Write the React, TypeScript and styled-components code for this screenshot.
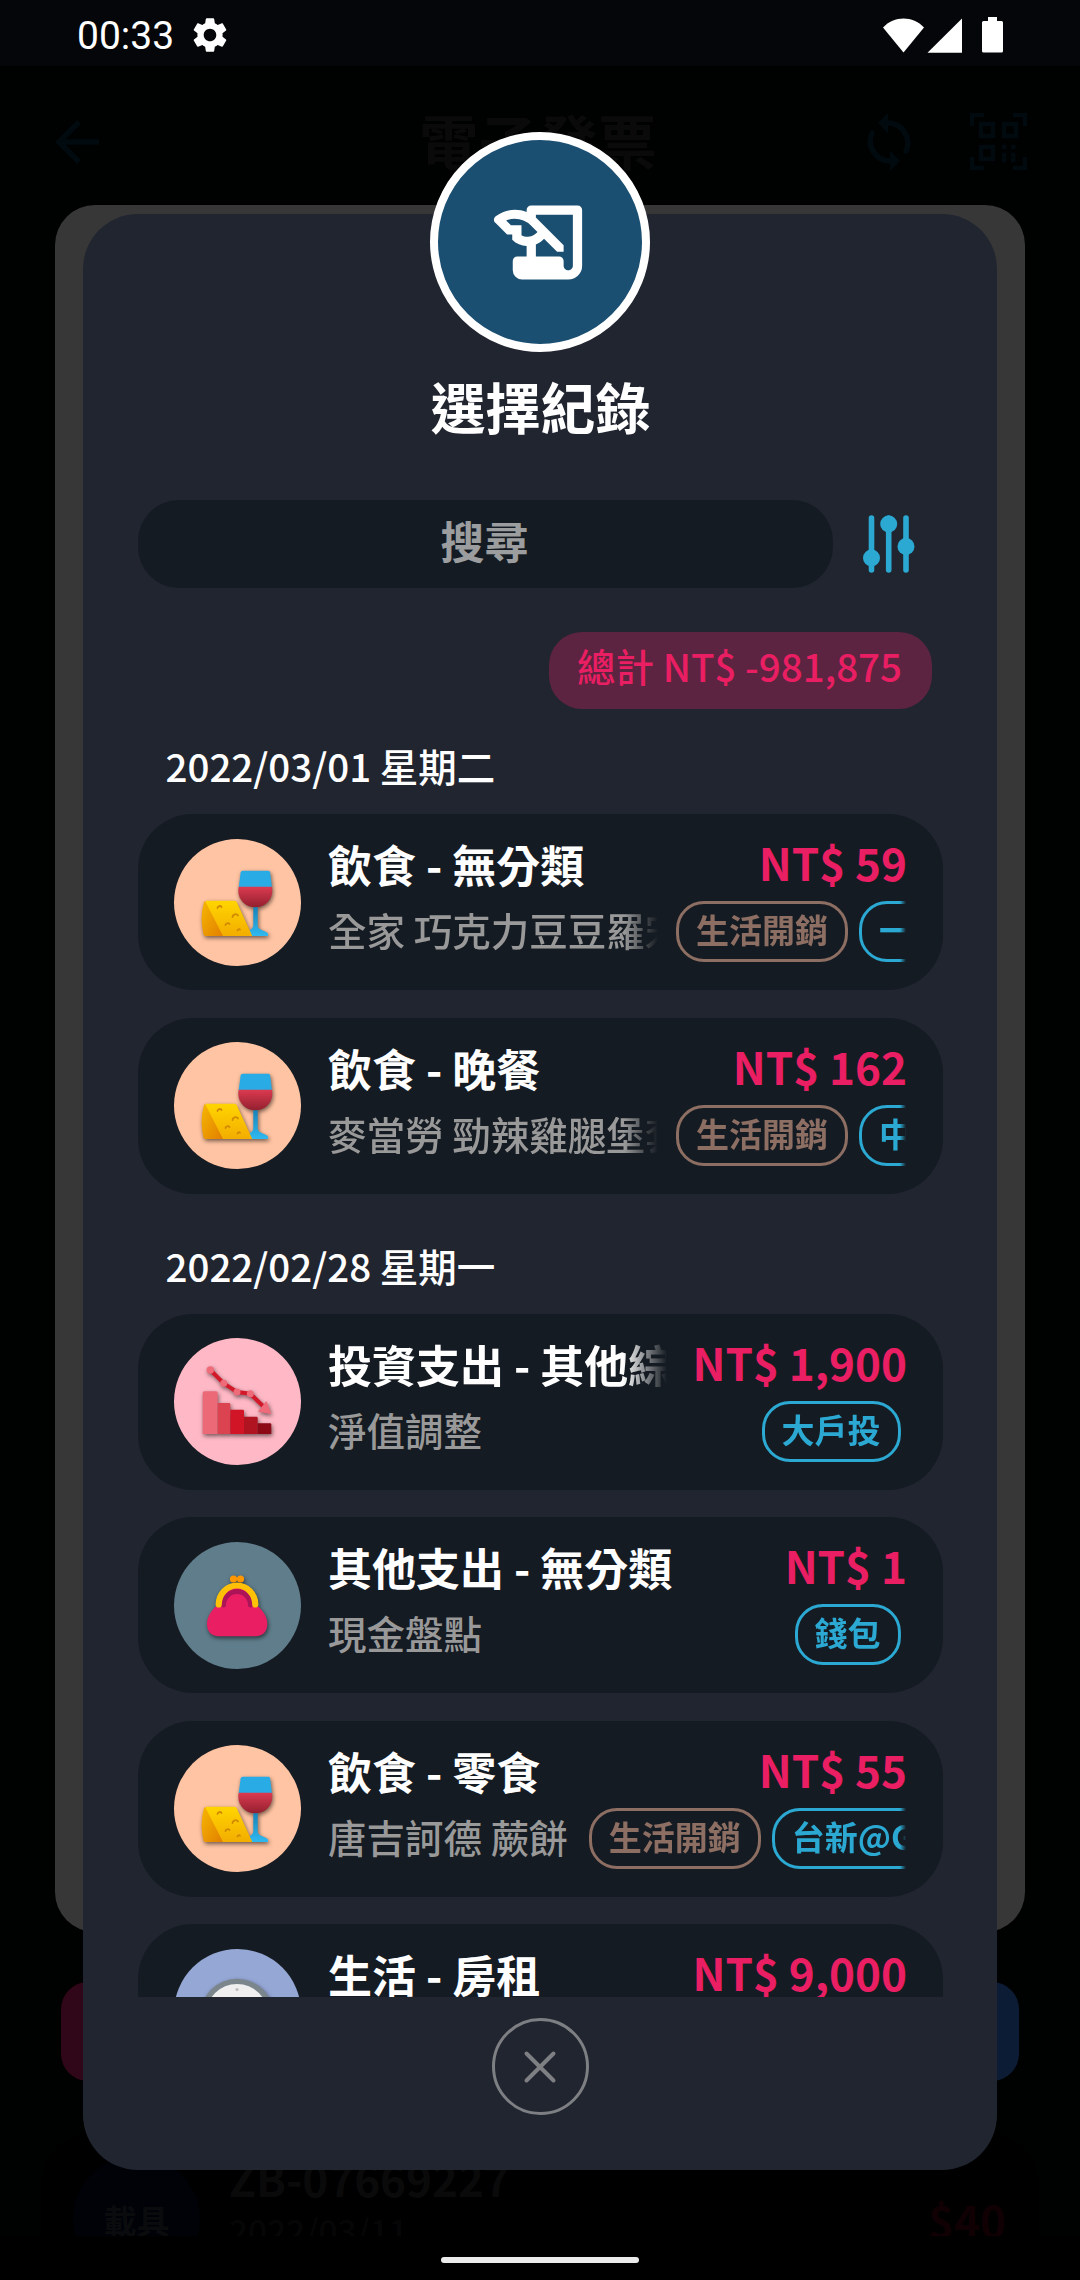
import React from "react";
import styled, { createGlobalStyle, css } from "styled-components";

const Global = createGlobalStyle`
  * { box-sizing: border-box; }
  body { margin: 0; background: #000101; }
`;

const PINK = "#e91e63";
const CYAN = "#2ba9d3";
const BROWN = "#8d6e63";

const Screen = styled.div`
  position: relative;
  width: 1080px;
  height: 2280px;
  overflow: hidden;
  display: flex;
  flex-direction: column;
  background: #000101;
  color: #fff;
  font-family: "Noto Sans CJK TC", sans-serif;
  font-weight: 500;
  white-space: nowrap;
`;

const StatusBar = styled.header`
  height: 66px;
  flex: none;
  display: flex;
  align-items: center;
  padding: 3px 76px 0 77px;
  background: #050609;
`;
const Clock = styled.span`
  font: 400 39px/48px Roboto, sans-serif;
  padding-top: 2px;
  margin-right: 15px;
`;
const StatusIcons = styled.svg`
  margin-left: auto;
  margin-right: 1px;
`;

const AppBar = styled.div`
  height: 139px;
  flex: none;
  display: flex;
  align-items: center;
  justify-content: space-between;
  padding: 12px 53px 0 55px;
  color: #000a0f;
`;
const AppTitle = styled.h1`
  margin: 0 0 6px 111px;
  font-size: 59.5px;
  line-height: 84px;
  color: #0a0a0a;
`;
const AppActions = styled.div`
  display: flex;
  align-items: center;
  gap: 58px;
`;
const Panel = styled.div`
  height: 1727px;
  flex: none;
  margin: 0 55px;
  border-radius: 40px;
  background: #373737;
`;
const ActionRow = styled.div`
  display: flex;
  justify-content: space-between;
  margin: 50px 61px 0;
`;
const ActionButton = styled.div<{ $color: string }>`
  width: 440px;
  height: 99px;
  border-radius: 27px;
  background: ${(p) => p.$color};
`;
const Invoice = styled.div`
  flex: 1;
  min-height: 0;
  overflow: hidden;
  display: flex;
  margin: 51px 41px 0;
  padding: 24px 33px 0 32px;
  border-radius: 55px 55px 0 0;
  background: #000;
`;
const Carrier = styled.div`
  width: 127px;
  height: 127px;
  flex: none;
  display: grid;
  place-items: center;
  border-radius: 50%;
  background: #000208;
  color: #0a0b0d;
  font-size: 33px;
  font-weight: 700;
`;
const InvoiceText = styled.div`
  padding: 0 0 0 29px;
  flex: 1;
`;
const InvoiceNo = styled.div`
  font: 700 44px/44px "Noto Sans CJK TC", sans-serif;
  color: #0a0a0a;
`;
const InvoiceDate = styled.div`
  font-size: 33.5px;
  line-height: 60px;
  color: #060606;
`;
const InvoiceAmount = styled.div`
  font-size: 44px;
  line-height: 50px;
  font-weight: 700;
  padding-top: 38px;
  color: #100004;
`;
const NavBar = styled.footer`
  height: 44px;
  flex: none;
  display: flex;
  justify-content: center;
  align-items: flex-start;
  padding-top: 21px;
  background: #000;
`;
const HomePill = styled.div`
  width: 198px;
  height: 6px;
  border-radius: 3px;
  background: #ebebeb;
`;

const Modal = styled.section`
  position: absolute;
  left: 83px;
  top: 214px;
  width: 914px;
  height: 1956px;
  display: flex;
  flex-direction: column;
  padding: 0 54px 0 55px;
  border-radius: 55px;
  background: #202530;
`;
const Badge = styled.div`
  position: absolute;
  left: 347px;
  top: -82px;
  width: 220px;
  height: 220px;
  display: grid;
  place-items: center;
  border: 8px solid #fff;
  border-radius: 50%;
  background: #1b4f72;
`;
const ModalTitle = styled.h2`
  margin: 151px 0 0;
  font-size: 55px;
  line-height: 80px;
  font-weight: 700;
  text-align: center;
`;
const SearchRow = styled.div`
  display: flex;
  align-items: center;
  gap: 30px;
  margin-top: 55px;
`;
const SearchBox = styled.div`
  width: 695px;
  height: 88px;
  border-radius: 41px;
  background: #151b22;
  color: #9b9d9f;
  font-size: 44px;
  font-weight: 700;
  line-height: 81px;
  padding-right: 2px;
  text-align: center;
`;
const Total = styled.div`
  align-self: flex-end;
  height: 77px;
  margin: 44px 11px 0 0;
  padding: 0 30px 0 28px;
  border-radius: 33px;
  background: #5c2440;
  color: ${PINK};
  font-size: 38.5px;
  line-height: 67px;
`;
const List = styled.div`
  flex: none;
  height: 1288px;
  overflow: hidden;
`;
const DayGroup = styled.section`
  display: flex;
  flex-direction: column;
  gap: 27.5px;
  margin-bottom: 15px;
`;
const DayLabel = styled.h3`
  margin: 0 0 -7.5px 27.5px;
  padding-top: 27px;
  font-size: 38.5px;
  line-height: 58px;
  font-weight: 500;
`;
const Card = styled.article`
  display: flex;
  align-items: center;
  height: 176px;
  padding: 0 37px 0 36px;
  border-radius: 55px;
  background: #151b22;
`;
const Disc = styled.div<{ $color: string }>`
  flex: none;
  width: 127px;
  height: 127px;
  border-radius: 50%;
  background: ${(p) => p.$color};
  svg { display: block; filter: drop-shadow(1px 2px 2px rgba(0, 0, 0, 0.55)); }
`;
const Body = styled.div`
  flex: 1;
  min-width: 0;
  height: 100%;
  padding: 19px 0 0 27px;
`;
const Line = styled.div`
  display: flex;
  justify-content: space-between;
`;
const fade = (px: number) => css`
  mask-image: linear-gradient(to left, transparent, #000 ${px}px);
`;
const Name = styled.div<{ $fade?: boolean }>`
  flex: 0 1 auto;
  min-width: 0;
  overflow: hidden;
  font-size: 44px;
  line-height: 62px;
  height: 68px;
  font-weight: 700;
  ${(p) => p.$fade && fade(44)}
`;
const Amount = styled.div`
  flex: none;
  margin-right: -1px;
  padding-left: 25px;
  color: ${PINK};
  font-size: 44px;
  line-height: 59px;
  font-weight: 700;
`;
const Note = styled.div<{ $fade?: boolean }>`
  flex: none;
  max-width: 330px;
  padding-right: 3px;
  overflow: hidden;
  color: #999;
  font-size: 38.5px;
  line-height: 57px;
  ${(p) => p.$fade && fade(34)}
`;
const Tags = styled.div`
  flex: 1;
  min-width: 0;
  display: flex;
  gap: 11px;
  margin-left: 12.5px;
  padding: 0 5.5px;
  overflow: hidden;
  ${fade(6)}
`;
const Tag = styled.span<{ $color: string }>`
  flex: none;
  height: 61px;
  padding: 0 17px;
  border: 3px solid ${(p) => p.$color};
  border-radius: 28px;
  color: ${(p) => p.$color};
  font-size: 33px;
  line-height: 51px;
  font-weight: 700;
  &:first-child { margin-left: auto; }
`;
const Close = styled.button`
  align-self: center;
  display: grid;
  place-items: center;
  width: 97px;
  height: 97px;
  margin: 21px 1px 0 0;
  padding: 0;
  border: 3px solid #7d7f83;
  border-radius: 50%;
  background: none;
`;

const FoodIcon = () => (
  <svg width="127" height="127" viewBox="0 0 127 127">
    <defs>
      <linearGradient id="cheese" x1="0" y1="0" x2="0" y2="1"><stop offset="0" stopColor="#ffd500" /><stop offset="1" stopColor="#f3ad00" /></linearGradient>
      <linearGradient id="rind" x1="0" y1="0" x2="1" y2="1"><stop offset="0" stopColor="#f6b700" /><stop offset="1" stopColor="#e27f00" /></linearGradient>
      <linearGradient id="wine" x1="0" y1="0" x2="0" y2="1"><stop offset="0" stopColor="#dc3a50" /><stop offset="1" stopColor="#93202f" /></linearGradient>
      <linearGradient id="stem" x1="0" y1="0" x2="0" y2="1"><stop offset="0" stopColor="#147fb5" /><stop offset="1" stopColor="#2fb9f0" /></linearGradient>
    </defs>
    <path d="M79.3 66h4.4v20q0 3 3 4.500l5.500 2.500q2.500 1.200 1.800 4H74l2-6q3.300-2 3.300-5z" fill="url(#stem)" />
    <path d="M68.500 31.700h26q1.400 0 1.600 1.500l1.800 14.800H64.700l2-14.800q.3-1.500 1.800-1.500z" fill="#29abe6" />
    <path d="M64.700 47.700h33.200c2.500 12-6.500 20.600-16.600 20.600S62.200 59.700 64.700 47.700z" fill="url(#wine)" />
    <path d="M32 61.700h28.500q1.500 0 2.300 1.600L78.300 97H31z" fill="url(#cheese)" />
    <path d="M31 61.700L49 97H32q-2 0-2.500-1.800-4-16 .5-32z" fill="url(#rind)" />
    <g fill="none" stroke="#d18a00" strokeWidth="1.800" strokeLinecap="round">
      <path d="M43.500 69a2.200 2.200 0 0 1 4-1" /><path d="M58.500 78a3 3 0 0 1 5.500-1.500" /><path d="M51.500 86a2.300 2.300 0 0 1 4-1" /><path d="M63.500 91.500a1.500 1.500 0 0 1 2.500-.8" />
    </g>
  </svg>
);

const LossIcon = () => (
  <svg width="127" height="127" viewBox="0 0 127 127">
    <path d="M28.700 96V55q0-1.700 1.700-1.700h11.600q1.700 0 1.700 1.700v41z" fill="#ec6a78" />
    <path d="M43.700 65h11.300q1.300 0 1.300 1.300V96H43.700z" fill="#dc4350" />
    <path d="M56.300 71.700h12.400q1.300 0 1.300 1.300v23H56.300z" fill="#d21526" />
    <path d="M70 78.700h12.400q1.300 0 1.300 1.300v16H70z" fill="#b01421" />
    <path d="M83.700 85.300H96q1.300 0 1.300 1.300V96H83.700z" fill="#8c0915" />
    <path d="M36.300 32l13.400 13.300L63 54l13.300 1.700 13.400 13" fill="none" stroke="#d3182a" strokeWidth="4" />
    <g fill="#ef6b79">
      <circle cx="36.300" cy="32" r="3.700" /><circle cx="49.700" cy="45.300" r="3.500" /><circle cx="63" cy="54" r="3.500" /><circle cx="76.300" cy="55.700" r="3.500" />
      <path d="M92.300 63.700L96.600 75.500 84.700 73.300z" stroke="#ef6b79" strokeLinejoin="round" />
    </g>
  </svg>
);

const PurseIcon = () => (
  <svg width="127" height="127" viewBox="0 0 127 127">
    <path d="M45 62h36c7 5 12.300 12 12.300 20 0 8-5 12.300-12.300 12.300H45C38 94.300 33 90 33 82c0-8 5-15 12-20z" fill="#e91e63" />
    <path d="M45 63a18 18 0 0 1 36 0z" fill="#e91e63" />
    <path d="M49.500 63a13.500 13.500 0 0 1 27 0" fill="none" stroke="#ad1457" strokeWidth="5" strokeLinecap="round" />
    <path d="M44.700 62.500a18.300 19 0 0 1 36.600 0" fill="none" stroke="#ffc107" strokeWidth="6.200" strokeLinecap="round" />
    <circle cx="59.500" cy="37" r="3.600" fill="#ff9800" /><circle cx="66.500" cy="37" r="3.600" fill="#ff9800" />
  </svg>
);

const DialIcon = () => (
  <svg width="127" height="127" viewBox="0 0 127 127">
    <circle cx="63" cy="66" r="36.300" fill="#7b868c" />
    <circle cx="63" cy="66" r="31" fill="#efefef" />
    <circle cx="63" cy="40.500" r="1.600" fill="#bdbdbd" />
  </svg>
);

const DISCS = {
  food: { color: "#ffc4a3", icon: <FoodIcon /> },
  loss: { color: "#ffb9c6", icon: <LossIcon /> },
  purse: { color: "#607d8b", icon: <PurseIcon /> },
  home: { color: "#95a7d5", icon: <DialIcon /> },
};

type Rec = {
  kind: keyof typeof DISCS;
  name: string;
  amount: string;
  note: string;
  tags: [string, string][];
  longName?: boolean;
  longNote?: boolean;
};

const DAYS: { label: string; records: Rec[] }[] = [
  {
    label: "2022/03/01 星期二",
    records: [
      { kind: "food", name: "飲食 - 無分類", amount: "NT$ 59", note: "全家 巧克力豆豆羅宋", longNote: true, tags: [["生活開銷", BROWN], ["一卡通", CYAN]] },
      { kind: "food", name: "飲食 - 晚餐", amount: "NT$ 162", note: "麥當勞 勁辣雞腿堡套", longNote: true, tags: [["生活開銷", BROWN], ["中信", CYAN]] },
    ],
  },
  {
    label: "2022/02/28 星期一",
    records: [
      { kind: "loss", name: "投資支出 - 其他綜合", longName: true, amount: "NT$ 1,900", note: "淨值調整", tags: [["大戶投", CYAN]] },
      { kind: "purse", name: "其他支出 - 無分類", amount: "NT$ 1", note: "現金盤點", tags: [["錢包", CYAN]] },
      { kind: "food", name: "飲食 - 零食", amount: "NT$ 55", note: "唐吉訶德 蕨餅", tags: [["生活開銷", BROWN], ["台新@GoGo", CYAN]] },
      { kind: "home", name: "生活 - 房租", amount: "NT$ 9,000", note: "", tags: [] },
    ],
  },
];

const RecordCard = ({ rec }: { rec: Rec }) => (
  <Card>
    <Disc $color={DISCS[rec.kind].color}>{DISCS[rec.kind].icon}</Disc>
    <Body>
      <Line>
        <Name $fade={rec.longName}>{rec.name}</Name>
        <Amount>{rec.amount}</Amount>
      </Line>
      <Line>
        <Note $fade={rec.longNote}>{rec.note}</Note>
        <Tags>
          {rec.tags.map(([label, color]) => (
            <Tag key={label} $color={color}>{label}</Tag>
          ))}
        </Tags>
      </Line>
    </Body>
  </Card>
);

export default function App() {
  return (
    <Screen>
      <Global />
      <StatusBar>
        <Clock>00:33</Clock>
        <svg width="42" height="42" viewBox="0 0 24 24" fill="#fff">
          <path d="M19.140 12.940c.04-.3.060-.61.060-.94 0-.32-.02-.64-.07-.94l2.030-1.580c.18-.14.230-.41.120-.61l-1.920-3.320c-.12-.22-.37-.29-.59-.22l-2.390.96c-.5-.38-1.030-.7-1.620-.94l-.36-2.540c-.04-.24-.24-.41-.48-.41h-3.840c-.24 0-.43.170-.47.410l-.36 2.540c-.59.240-1.130.570-1.620.940l-2.390-.96c-.22-.08-.47 0-.59.220L2.740 8.870c-.12.210-.08.470.120.610l2.030 1.580c-.05.300-.09.630-.09.940s.02.640.070.940l-2.030 1.580c-.18.140-.23.410-.12.610l1.920 3.320c.120.220.370.290.590.220l2.390-.96c.500.380 1.030.700 1.620.940l.36 2.540c.05.240.240.410.480.410h3.840c.240 0 .440-.17.470-.41l.36-2.540c.590-.24 1.130-.56 1.620-.94l2.390.96c.220.080.470 0 .590-.22l1.920-3.320c.120-.22.070-.47-.12-.61l-2.010-1.580zM12 15.600c-1.980 0-3.600-1.620-3.600-3.600s1.620-3.600 3.600-3.600 3.600 1.620 3.600 3.600-1.620 3.600-3.600 3.600z" />
        </svg>
        <StatusIcons width="120" height="36" viewBox="0 0 120 36" fill="#fff">
          <path d="M0 10.500C11-1.500 30-1.500 41 10.500L20.500 35.500z" />
          <path d="M44.500 35.700L79 1.500v34.200z" />
          <path d="M105 0h9v4h4.500q1.500 0 1.500 1.500V34q0 1.500-1.500 1.500h-18q-1.500 0-1.500-1.500V5.500Q99 4 100.500 4h4.500z" />
        </StatusIcons>
      </StatusBar>

      <AppBar>
        <svg width="44" height="44" viewBox="0 0 44 44" fill="none" stroke="currentColor" strokeWidth="5.500">
          <path d="M24 2L4 22l20 20M4 22h40" />
        </svg>
        <AppTitle>電子發票</AppTitle>
        <AppActions>
          <svg width="46" height="60" viewBox="0 0 46 60" fill="none" stroke="currentColor" strokeWidth="5.500" strokeLinecap="round">
            <path d="M20 11a20 20 0 0 1 20 28M26 49A20 20 0 0 1 6 21" />
            <path d="M12 11L22 1v20zM34 49L24 39v20z" fill="currentColor" stroke="none" />
          </svg>
          <svg width="57" height="57" viewBox="0 0 57 57" fill="none" stroke="currentColor" strokeWidth="4.500">
            <path d="M2 13V2h12M43 2h12v11M2 44v11h12M43 55h12V44" />
            <path d="M11 11h12v12H11zM34 11h12v12H34zM11 34h12v12H11z" />
            <path d="M32 34h18M32 42h18M32 47h18" strokeDasharray="4.500" />
          </svg>
        </AppActions>
      </AppBar>
      <Panel />
      <ActionRow>
        <ActionButton $color="#300718" />
        <ActionButton $color="#0d1c35" />
      </ActionRow>
      <Invoice>
        <Carrier>載具</Carrier>
        <InvoiceText>
          <InvoiceNo>ZB-07669227</InvoiceNo>
          <InvoiceDate>2022/03/11</InvoiceDate>
        </InvoiceText>
        <InvoiceAmount>$40</InvoiceAmount>
      </Invoice>
      <NavBar><HomePill /></NavBar>

      <Modal>
        <Badge>
          <svg width="111" height="111" viewBox="0 0 24 24" fill="#fff">
            <path fillRule="evenodd" d="M9 5.380V5a1 1 0 0 1 1-1h10a1 1 0 0 1 1 1v12a3 3 0 0 1-3 3H8a2 2 0 0 1-2-2v-2a1 1 0 0 1 1-1h2v-2.250c-1.130-.05-2.250-.5-3.110-1.360v-1.110H4.780L2.250 7.750c-.5-.5-.4-1.100.150-1.500C4.400 4.850 6.800 4.550 9 5.380zM7.890 10.410c.4.220.86.340 1.330.340.730 0 1.410-.29 1.920-.8l.2-.2-1.410-1.410a4.970 4.970 0 0 0-3.540-1.460c-.63 0-1.250.12-1.820.340l1.040 1.040h2.280v2.150zM19 17c0 .55-.45 1-1 1s-1-.45-1-1v-1a1 1 0 0 0-1-1h-5v-2.590c.570-.23 1.100-.57 1.560-1.030l.2-.2L15.590 14H17v-1.410l-6-5.970V6h8z" />
          </svg>
        </Badge>
        <ModalTitle>選擇紀錄</ModalTitle>
        <SearchRow>
          <SearchBox>搜尋</SearchBox>
          <svg width="52" height="58" viewBox="0 0 52 58" fill={CYAN} stroke={CYAN}>
            <path d="M8.500 3v52M25.700 3v52M43 3v52" strokeWidth="5.600" strokeLinecap="round" />
            <g stroke="none">
              <circle cx="8.500" cy="43" r="8.500" /><circle cx="25.700" cy="9" r="8.500" /><circle cx="43" cy="31.500" r="8.500" />
            </g>
          </svg>
        </SearchRow>
        <Total>總計 NT$ -981,875</Total>
        <List>
          {DAYS.map((day) => (
            <DayGroup key={day.label}>
              <DayLabel>{day.label}</DayLabel>
              {day.records.map((rec) => (
                <RecordCard key={rec.name} rec={rec} />
              ))}
            </DayGroup>
          ))}
        </List>
        <Close aria-label="close">
          <svg width="34" height="34" viewBox="0 0 34 34" stroke="#7d7f83" strokeWidth="4" strokeLinecap="round">
            <path d="M3.500 3.500l27 27M30.500 3.500l-27 27" />
          </svg>
        </Close>
      </Modal>
    </Screen>
  );
}
